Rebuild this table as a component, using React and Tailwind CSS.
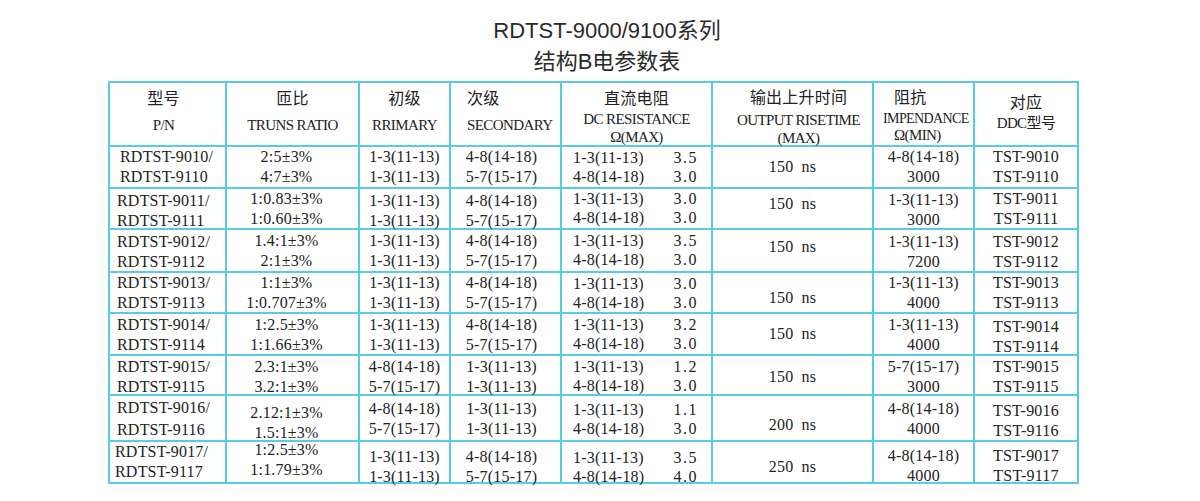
import React from 'react'

const SHIFT = {
  '-5': 'translate-y-[-5px]',
  '-4': 'translate-y-[-4px]',
  '-2': 'translate-y-[-2px]',
  '-1': 'translate-y-[-1px]',
  '0': '',
  '1': 'translate-y-[1px]',
  '2': 'translate-y-[2px]',
  '3': 'translate-y-[3px]',
  '4': 'translate-y-[4px]',
  '5': 'translate-y-[5px]',
  '7': 'translate-y-[7px]',
}

const P13 = '1-3(11-13)'
const P48 = '4-8(14-18)'
const P57 = '5-7(15-17)'

// header latin text is narrow and tall in the scan
const EN = 'text-[15px] tracking-[-0.6px]'

const HEAD = [
  {
    box: 'items-center pr-[8px]',
    inner: 'items-center',
    shift: 'translate-y-[-2px]',
    lines: [['型号', 'leading-[27px] text-[16px]'], ['P/N', `leading-[27px] ${EN}`]],
  },
  {
    box: 'items-center',
    inner: 'items-center',
    shift: 'translate-y-[-2px]',
    lines: [['匝比', 'leading-[27px] text-[16px]'], ['TRUNS RATIO', `leading-[27px] ${EN}`]],
  },
  {
    box: 'items-center',
    inner: 'items-center',
    shift: 'translate-y-[-2px]',
    lines: [['初级', 'leading-[27px] text-[16px]'], ['RRIMARY', `leading-[27px] ${EN}`]],
  },
  {
    box: 'items-start pl-[16px]',
    inner: 'items-start',
    shift: 'translate-y-[-2px]',
    lines: [['次级', 'leading-[27px] text-[16px]'], ['SECONDARY', `leading-[27px] ${EN}`]],
  },
  {
    box: 'items-center',
    inner: 'items-center',
    shift: 'translate-y-[2px]',
    lines: [
      ['直流电阻', 'leading-[23px] text-[16px]'],
      ['DC RESISTANCE', `leading-[19px] ${EN}`],
      ['Ω(MAX)', `leading-[17px] ${EN}`],
    ],
  },
  {
    box: 'items-center pl-[12px]',
    inner: 'items-center',
    shift: 'translate-y-[2px]',
    lines: [
      ['输出上升时间', 'leading-[24px] text-[16px]'],
      ['OUTPUT RISETIME', `leading-[20px] ${EN}`],
      ['(MAX)', `leading-[16px] ${EN}`],
    ],
  },
  {
    box: 'items-start',
    inner: 'items-start',
    shift: '',
    lines: [
      ['阻抗', 'leading-[24px] text-[16px] pl-[20px]'],
      ['IMPENDANCE', 'leading-[18px] text-[14px] tracking-[-0.6px] pl-[9px]'],
      ['Ω(MIN)', `leading-[14px] ${EN} pl-[20px]`],
    ],
  },
  {
    box: 'items-center',
    inner: 'items-center',
    shift: 'translate-y-[-1px]',
    lines: [['对应', 'leading-[20px] text-[16px]'], ['DDC型号', `leading-[20px] ${EN}`]],
  },
]

const ROWS = [
  {
    pn: ['RDTST-9010/', 'RDTST-9110'], pnPad: 'pl-[10px]',
    ratio: ['2:5±3%', '4:7±3%'], pri: [P13, P13], sec: [P48, P57],
    dc: [[P13, '3.5'], [P48, '3.0']], rise: '150 ns', imp: [P48, '3000'], ddc: ['TST-9010', 'TST-9110'],
    shift: [0, 0, 0, 0, 0, 0, 0, 0],
  },
  {
    pn: ['RDTST-9011/', 'RDTST-9111'],
    ratio: ['1:0.83±3%', '1:0.60±3%'], pri: [P13, P13], sec: [P48, P57],
    dc: [[P13, '3.0'], [P48, '3.0']], rise: '150 ns', imp: [P13, '3000'], ddc: ['TST-9011', 'TST-9111'],
    shift: [2, 0, 2, 2, -1, -5, 1, 0],
  },
  {
    pn: ['RDTST-9012/', 'RDTST-9112'],
    ratio: ['1.4:1±3%', '2:1±3%'], pri: [P13, P13], sec: [P48, P57],
    dc: [[P13, '3.5'], [P48, '3.0']], rise: '150 ns', imp: [P13, '7200'], ddc: ['TST-9012', 'TST-9112'],
    shift: [1, 0, 0, 0, -1, -4, 1, 1],
  },
  {
    pn: ['RDTST-9013/', 'RDTST-9113'],
    ratio: ['1:1±3%', '1:0.707±3%'], pri: [P13, P13], sec: [P48, P57],
    dc: [[P13, '3.0'], [P48, '3.0']], rise: '150 ns', imp: [P13, '4000'], ddc: ['TST-9013', 'TST-9113'],
    shift: [0, 0, 0, 0, 0, 5, 0, 0],
  },
  {
    pn: ['RDTST-9014/', 'RDTST-9114'],
    ratio: ['1:2.5±3%', '1:1.66±3%'], pri: [P13, P13], sec: [P48, P57],
    dc: [[P13, '3.2'], [P48, '3.0']], rise: '150 ns', imp: [P13, '4000'], ddc: ['TST-9014', 'TST-9114'],
    shift: [1, 1, 1, 1, 0, 0, 1, 3],
  },
  {
    pn: ['RDTST-9015/', 'RDTST-9115'],
    ratio: ['2.3:1±3%', '3.2:1±3%'], pri: [P48, P57], sec: [P13, P13],
    dc: [[P13, '1.2'], [P48, '3.0']], rise: '150 ns', imp: [P57, '3000'], ddc: ['TST-9015', 'TST-9115'],
    shift: [2, 2, 2, 2, 1, 2, 2, 2],
  },
  {
    pn: ['RDTST-9016/', 'RDTST-9116'], pnLead: 'leading-[22px]',
    ratio: ['2.12:1±3%', '1.5:1±3%'], pri: [P48, P57], sec: [P13, P13],
    dc: [[P13, '1.1'], [P48, '3.0']], rise: '200 ns', imp: [P48, '4000'], ddc: ['TST-9016', 'TST-9116'],
    shift: [1, 5, 1, 1, 1, 7, 1, 3],
  },
  {
    pn: ['RDTST-9017/', 'RDTST-9117'], pnPad: 'pl-[5px]',
    ratio: ['1:2.5±3%', '1:1.79±3%'], pri: [P13, P13], sec: [P48, P57],
    dc: [[P13, '3.5'], [P48, '4.0']], rise: '250 ns', imp: [P48, '4000'], ddc: ['TST-9017', 'TST-9117'],
    shift: [0, -2, 5, 5, 5, 5, 4, 4],
  },
]

function Cell({ box, inner = '', shift, children }) {
  return (
    <div className={`bg-white flex flex-col justify-center ${box}`}>
      <div className={`flex flex-col ${inner} ${shift}`}>{children}</div>
    </div>
  )
}

function Lines({ items, lead = 'leading-[20px]', align = 'items-center' }) {
  return (
    <div className={`flex flex-col ${align} ${lead}`}>
      {items.map((t, i) => (
        <span key={i} className="whitespace-nowrap">{t}</span>
      ))}
    </div>
  )
}

function DataRow({ row }) {
  const s = row.shift.map(n => SHIFT[String(n)])
  return (
    <>
      <Cell box={`items-start ${row.pnPad || 'pl-[7px]'}`} shift={s[0]}>
        <Lines items={row.pn} lead={row.pnLead || 'leading-[20px]'} align="items-start" />
      </Cell>
      <Cell box="items-center pr-[12px]" shift={s[1]}>
        <Lines items={row.ratio} />
      </Cell>
      <Cell box="items-center" shift={s[2]}>
        <Lines items={row.pri} />
      </Cell>
      <Cell box="items-center pr-[8px]" shift={s[3]}>
        <Lines items={row.sec} />
      </Cell>
      <Cell box="items-stretch pl-[11px] pr-[13px]" shift={s[4]}>
        <div className="flex flex-col leading-[19px]">
          {row.dc.map(([a, b], i) => (
            <div key={i} className="flex justify-between whitespace-nowrap">
              <span>{a}</span>
              <span className="tracking-[1.5px]">{b}</span>
            </div>
          ))}
        </div>
      </Cell>
      <Cell box="items-center" shift={s[5]}>
        <span className="leading-[20px] [word-spacing:4px] whitespace-nowrap">{row.rise}</span>
      </Cell>
      <Cell box="items-center" shift={s[6]}>
        <Lines items={row.imp} />
      </Cell>
      <Cell box="items-center" shift={s[7]}>
        <Lines items={row.ddc} />
      </Cell>
    </>
  )
}

export default function App() {
  return (
    <div className="w-[1200px] h-[501px] bg-white text-[#222] overflow-hidden">
      {/* Title */}
      <div className="h-[81px] pt-[15px] pl-[14px] flex flex-col items-center font-['Liberation_Sans','Noto_Sans_CJK_SC',sans-serif] text-[22px] leading-[31px] text-[#2a2a2a]">
        <div>RDTST-9000/9100系列</div>
        <div>结构B电参数表</div>
      </div>

      {/* Parameter table */}
      <div className="pl-[108px]">
        <div className="grid w-max grid-cols-[115px_131px_89px_109px_149px_159px_99px_102px] grid-rows-[62px_40px_39px_41px_39px_40px_38px_44px_40px] gap-[2px] p-[2px] bg-[#58cbe6] font-['Liberation_Serif','Noto_Sans_CJK_SC',serif] text-[16px] tracking-[0.2px]">
          {HEAD.map((h, i) => (
            <Cell key={i} box={h.box} inner={h.inner} shift={h.shift}>
              {h.lines.map(([t, cls], j) => (
                <span key={j} className={`whitespace-nowrap ${cls}`}>{t}</span>
              ))}
            </Cell>
          ))}
          {ROWS.map((row, i) => (
            <DataRow key={i} row={row} />
          ))}
        </div>
      </div>
    </div>
  )
}
